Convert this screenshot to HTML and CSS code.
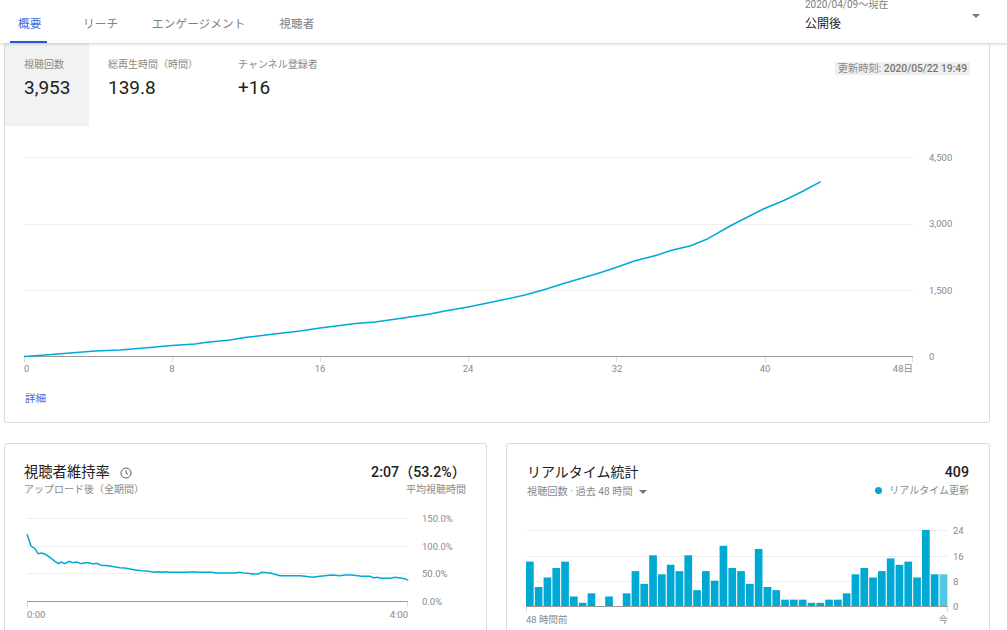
FILE: index.html
```html
<!DOCTYPE html>
<html>
<head>
    <title>Video Analytics</title>
    <link rel="stylesheet" href="styles.css">
</head>
<body>

    <div class="topbar">
        <div class="tab active">概要</div>
        <div class="tab">リーチ</div>
        <div class="tab">エンゲージメント</div>
        <div class="tab">視聴者</div>
        <div class="range">
            <div class="range-dates">2020/04/09〜現在</div>
            <div class="range-name">公開後</div>
            <span class="range-arrow"></span>
        </div>
    </div>

    <div class="content">
        <div class="card overview">
            <div class="stats">
                <div class="stat selected">
                    <div class="stat-label">視聴回数</div>
                    <div class="stat-value">3,953</div>
                </div>
                <div class="stat wide">
                    <div class="stat-label">総再生時間（時間）</div>
                    <div class="stat-value">139.8</div>
                </div>
                <div class="stat">
                    <div class="stat-label">チャンネル登録者</div>
                    <div class="stat-value">+16</div>
                </div>
                <div class="updated">更新時刻: <b>2020/05/22 19:49</b></div>
            </div>

            <!-- viewBox uses page coordinates, easier to read off the chart -->
            <svg class="chart" width="984" height="254" viewBox="5 126 984 254">
                <line class="grid" x1="24" x2="913" y1="157.5" y2="157.5"/>
                <line class="grid" x1="24" x2="913" y1="224.5" y2="224.5"/>
                <line class="grid" x1="24" x2="913" y1="290.5" y2="290.5"/>
                <line class="tick" x1="24.5" x2="24.5" y1="357" y2="362"/>
                <line class="tick" x1="172.5" x2="172.5" y1="357" y2="362"/>
                <line class="tick" x1="320.5" x2="320.5" y1="357" y2="362"/>
                <line class="tick" x1="468.5" x2="468.5" y1="357" y2="362"/>
                <line class="tick" x1="616.5" x2="616.5" y1="357" y2="362"/>
                <line class="tick" x1="765.5" x2="765.5" y1="357" y2="362"/>
                <line class="tick" x1="912.5" x2="912.5" y1="357" y2="362"/>
                <line class="base" x1="24" x2="913" y1="356.5" y2="356.5"/>
                <polyline class="trend" points="24,356.5 45,355 70,353 95,351 120,350 150,347.5 172,345.5 195,344 205,342.5 230,340 245,337.5 270,334.5 300,331 320,328 340,325.5 355,323.5 375,322 400,318.5 430,314 445,311 468,307 490,302.5 525,295 543,290 562,284 590,275.7 600,272.7 616.7,267.3 635,260.7 656.7,255.3 671.7,250.3 690.7,245.7 706.7,239.3 730,226 763.3,209 783.3,200.7 803.3,191 820.7,181.7"/>
                <text class="axis" x="929" y="161">4,500</text>
                <text class="axis" x="929" y="227">3,000</text>
                <text class="axis" x="929" y="294">1,500</text>
                <text class="axis" x="929" y="360">0</text>
                <text class="axis" x="24" y="372">0</text>
                <text class="axis mid" x="172" y="372">8</text>
                <text class="axis mid" x="320" y="372">16</text>
                <text class="axis mid" x="468" y="372">24</text>
                <text class="axis mid" x="617" y="372">32</text>
                <text class="axis mid" x="765" y="372">40</text>
                <text class="axis end" x="913" y="372">48日</text>
            </svg>
            <a class="more">詳細</a>
        </div>

        <div class="row">
            <div class="card">
                <div class="card-head">
                    <div>
                        <div class="card-title">視聴者維持率
                            <svg class="clock" width="12" height="12" viewBox="0 0 12 12">
                                <circle cx="6" cy="6" r="5"/>
                                <path d="M6 3.2V6.2L8 7.4"/>
                            </svg>
                        </div>
                        <div class="card-sub">アップロード後（全期間）</div>
                    </div>
                    <div class="card-right">
                        <div class="card-total">2:07（53.2%）</div>
                        <div class="card-sub">平均視聴時間</div>
                    </div>
                </div>
                <svg class="chart" width="481" height="124" viewBox="5 506 481 124">
                    <line class="grid" x1="27" x2="408" y1="518.5" y2="518.5"/>
                    <line class="grid" x1="27" x2="408" y1="546.5" y2="546.5"/>
                    <line class="grid" x1="27" x2="408" y1="573.5" y2="573.5"/>
                    <line class="tick" x1="27.5" x2="27.5" y1="602" y2="607"/>
                    <line class="tick" x1="407.5" x2="407.5" y1="602" y2="607"/>
                    <line class="base" x1="27" x2="408" y1="601.5" y2="601.5"/>
                    <polyline class="trend" points="27,534.3 31,546 35,548.7 38,553.7 42,553 46,554.7 50,557.3 55,561.3 58.3,563.7 61.3,562 65,563.7 69,561.3 73,562.7 76.7,562 81,563.7 85,562.7 89,562.7 93,564 96.7,563.3 101,565.3 108.3,565.7 120,567.7 125,568 135,570 141.7,570.7 146.7,571 154,572.3 158.3,571.7 161.7,572.3 165,571.7 170,572.3 188.3,572.3 192.3,571.7 196.7,572.3 211.7,572.3 216.7,573 235,573 239,572.3 243.3,573 248,573.3 251.7,574 258.3,574 261.7,572.3 270,573 280,575.7 300,575.7 305,576.3 312.7,577.3 320,576.3 331.7,575 340,575.7 345,575 351.7,575 361.7,576.3 370,576.3 374,578 376.7,577.3 381.7,578.3 390,578.3 395,577.3 405,578.7 408.3,580.3"/>
                    <text class="axis" x="422" y="522">150.0%</text>
                    <text class="axis" x="422" y="550">100.0%</text>
                    <text class="axis" x="422" y="577">50.0%</text>
                    <text class="axis" x="422" y="605">0.0%</text>
                    <text class="axis" x="27" y="618">0:00</text>
                    <text class="axis end" x="408" y="618">4:00</text>
                </svg>
            </div>

            <div class="card realtime">
                <div class="card-head">
                    <div>
                        <div class="card-title">リアルタイム統計</div>
                        <div class="card-sub filter">視聴回数 · 過去 48 時間 <span class="filter-arrow"></span></div>
                    </div>
                    <div class="card-right">
                        <div class="card-total">409</div>
                        <div class="card-sub live"><span class="live-dot"></span>リアルタイム更新</div>
                    </div>
                </div>
                <svg class="chart" width="482" height="124" viewBox="507 506 482 124">
                    <line class="grid" x1="526" x2="948" y1="530.5" y2="530.5"/>
                    <line class="grid" x1="526" x2="948" y1="556.5" y2="556.5"/>
                    <line class="grid" x1="526" x2="948" y1="581.5" y2="581.5"/>
                    <line class="tick" x1="526.5" x2="526.5" y1="607" y2="612"/>
                    <line class="tick" x1="947.5" x2="947.5" y1="607" y2="612"/>
                    <line class="base" x1="526" x2="948" y1="606.5" y2="606.5"/>
                    <!-- height = views, one view is 3.17px -->
                    <g class="bars" transform="translate(0 606) scale(1 -3.17)">
                        <rect x="526" width="7.7" height="14"/>
                        <rect x="534.8" width="7.7" height="6"/>
                        <rect x="543.6" width="7.7" height="9"/>
                        <rect x="552.4" width="7.7" height="12"/>
                        <rect x="561.2" width="7.7" height="14"/>
                        <rect x="570" width="7.7" height="3"/>
                        <rect x="578.8" width="7.7" height="1"/>
                        <rect x="587.6" width="7.7" height="4"/>
                        <rect x="605.2" width="7.7" height="3"/>
                        <rect x="622.8" width="7.7" height="4"/>
                        <rect x="631.6" width="7.7" height="11"/>
                        <rect x="640.4" width="7.7" height="7"/>
                        <rect x="649.2" width="7.7" height="16"/>
                        <rect x="658" width="7.7" height="10"/>
                        <rect x="666.8" width="7.7" height="13"/>
                        <rect x="675.6" width="7.7" height="11"/>
                        <rect x="684.4" width="7.7" height="16"/>
                        <rect x="693.2" width="7.7" height="5"/>
                        <rect x="702" width="7.7" height="11"/>
                        <rect x="710.8" width="7.7" height="8"/>
                        <rect x="719.6" width="7.7" height="19"/>
                        <rect x="728.4" width="7.7" height="12"/>
                        <rect x="737.2" width="7.7" height="11"/>
                        <rect x="746" width="7.7" height="7"/>
                        <rect x="754.8" width="7.7" height="18"/>
                        <rect x="763.6" width="7.7" height="6"/>
                        <rect x="772.4" width="7.7" height="5"/>
                        <rect x="781.2" width="7.7" height="2"/>
                        <rect x="790" width="7.7" height="2"/>
                        <rect x="798.8" width="7.7" height="2"/>
                        <rect x="807.6" width="7.7" height="1"/>
                        <rect x="816.4" width="7.7" height="1"/>
                        <rect x="825.2" width="7.7" height="2"/>
                        <rect x="834" width="7.7" height="2"/>
                        <rect x="842.8" width="7.7" height="4"/>
                        <rect x="851.6" width="7.7" height="10"/>
                        <rect x="860.4" width="7.7" height="12"/>
                        <rect x="869.2" width="7.7" height="9"/>
                        <rect x="878" width="7.7" height="11"/>
                        <rect x="886.8" width="7.7" height="15"/>
                        <rect x="895.6" width="7.7" height="13"/>
                        <rect x="904.4" width="7.7" height="14"/>
                        <rect x="913.2" width="7.7" height="9"/>
                        <rect x="922" width="7.7" height="24"/>
                        <rect x="930.8" width="7.7" height="10"/>
                        <rect class="current" x="939.6" width="7.7" height="10"/>
                    </g>
                    <text class="axis" x="953" y="534">24</text>
                    <text class="axis" x="953" y="560">16</text>
                    <text class="axis" x="953" y="585">8</text>
                    <text class="axis" x="953" y="610">0</text>
                    <text class="axis" x="526" y="623">48 時間前</text>
                    <text class="axis end" x="948" y="623">今</text>
                </svg>
            </div>
        </div>
    </div>

</body>
</html>
```
FILE: styles.css
```css
html, body {
    margin: 0;
    height: 100%;
    overflow: hidden;
    background: white;
    font-family: Roboto, "Noto Sans CJK JP", sans-serif;
    color: #212121;
}

.topbar {
    position: relative;
    z-index: 2;
    display: flex;
    height: 43px;
    padding-left: 10px;
    background: white;
    box-shadow: 0 1px 3px rgba(0, 0, 0, 0.2);
    overflow: hidden;
}
.tab {
    padding: 0 7px 0 8px;
    margin-right: 19px;
    font-size: 11.7px;
    line-height: 48px;
    color: #808080;
}
.tab.active {
    width: 24px;
    padding: 0 5px 0 8px;
    margin-right: 28px;
    color: #3b6fdc;
    border-bottom: 2px solid #1f57d6;
    height: 41px;
}
.range {
    position: relative;
    width: 202px;
    margin-left: auto;
}
.range-dates {
    margin-top: -1px;
    font-size: 10px;
    line-height: 11px;
    color: #808080;
}
.range-name {
    margin-top: 7px;
    font-size: 12px;
    line-height: 14px;
}
.range-arrow {
    position: absolute;
    top: 14px;
    left: 167px;
    border-top: 4px solid #757575;
    border-left: 4px solid transparent;
    border-right: 4px solid transparent;
}

.content {
    width: 986px;
    margin-left: 4px;
}
.card {
    box-sizing: border-box;
    border: 1px solid #dcdcdc;
    border-radius: 3px;
    background: white;
}
.overview {
    height: 380px;
    border-top: none;
}

.stats {
    display: flex;
    align-items: flex-start;
    height: 83px;
}
.stat {
    box-sizing: border-box;
    height: 83px;
    padding: 15px 19px 0;
}
.stat.selected {
    width: 84px;
    background: #f2f2f2;
}
.stat.wide { min-width: 130px; }
.stat-label {
    font-size: 10px;
    line-height: 14px;
    color: #8a8a8a;
}
.stat-value {
    margin-top: 3px;
    font-size: 19px;
    line-height: 26px;
}
.updated {
    margin: 19px 19px 0 auto;
    padding: 0 3px;
    background: #eeeeee;
    font-size: 10.25px;
    line-height: 13px;
    color: #8a8a8a;
}
.updated b {
    font-weight: 500;
    color: #757575;
}

.chart { display: block; }
.grid { stroke: #eeeeee; }
.base { stroke: #999999; }
.tick { stroke: #dddddd; }
.trend {
    fill: none;
    stroke: #00a9d6;
    stroke-width: 1.5;
}
.axis {
    font-size: 9.5px;
    fill: #8a8a8a;
}
.mid { text-anchor: middle; }
.end { text-anchor: end; }
.bars rect { fill: #00a9d4; }
.bars .current { fill: #55c6e0; }

.more {
    display: block;
    margin: 12px 0 0 20px;
    font-size: 10.5px;
    line-height: 14px;
    color: #3b6fdc;
}

.row {
    display: grid;
    grid-template-columns: 483px 484px;
    column-gap: 19px;
    margin-top: 20px;
    height: 300px;
}
.card-head {
    display: flex;
    justify-content: space-between;
    height: 62px;
    padding: 18px 20px 0 19px;
    box-sizing: border-box;
}
.realtime .card-head { padding-left: 20px; }
.card-title {
    font-size: 14.3px;
    line-height: 20px;
}
.realtime .card-title { font-size: 14px; }
.clock {
    margin-left: 7px;
    vertical-align: -2px;
    fill: none;
    stroke: #606060;
    stroke-width: 1;
}
.card-sub {
    margin-top: 1px;
    font-size: 10px;
    line-height: 14px;
    color: #8a8a8a;
}
.filter {
    margin-top: 3px;
    font-size: 10.2px;
}
.live { margin-top: 2px; }
.card-right { text-align: right; }
.card-total {
    font-size: 14.2px;
    line-height: 20px;
    font-weight: 500;
}
.filter-arrow {
    display: inline-block;
    margin-left: 4px;
    vertical-align: 1px;
    border-top: 4px solid #757575;
    border-left: 4px solid transparent;
    border-right: 4px solid transparent;
}
.live-dot {
    display: inline-block;
    width: 7px;
    height: 7px;
    margin-right: 7px;
    border-radius: 50%;
    background: #00a9d4;
}
```
